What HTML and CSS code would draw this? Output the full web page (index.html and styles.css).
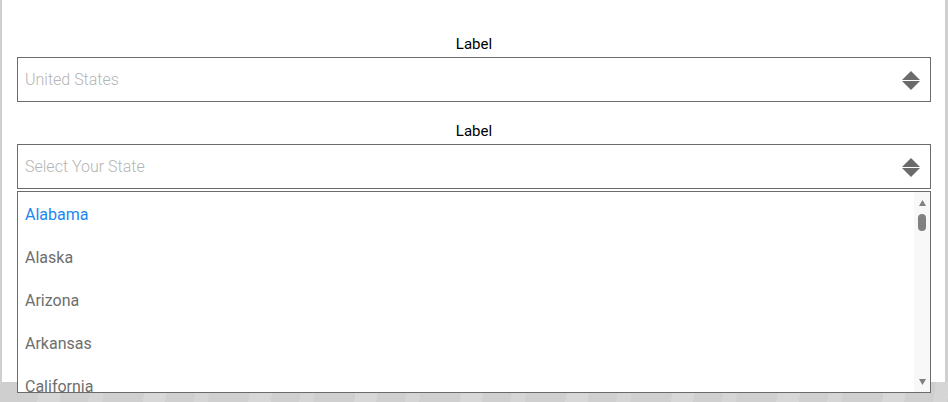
FILE: index.html
```html
<!DOCTYPE html>
<html lang="en">
<head>
  <meta charset="UTF-8" />
  <meta name="viewport" content="width=device-width, initial-scale=1.0"/>
  <title>Select</title>
  <link rel="stylesheet" href="styles.css">
</head>
<body>
  <div class="panel">
    <div class="field">
      <label class="field-label">Label</label>
      <div class="select-box">
        <span class="placeholder">United States</span>
        <svg class="arrows" width="18" height="19" viewBox="0 0 18 19">
          <polygon points="9,0 18,9 0,9" />
          <polygon points="0,10 18,10 9,19" />
        </svg>
      </div>
    </div>

    <div class="field second">
      <label class="field-label">Label</label>
      <div class="select-box">
        <span class="placeholder">Select Your State</span>
        <svg class="arrows" width="18" height="19" viewBox="0 0 18 19">
          <polygon points="9,0 18,9 0,9" />
          <polygon points="0,10 18,10 9,19" />
        </svg>
      </div>

      <div class="dropdown">
        <ul class="options">
          <li class="active">Alabama</li>
          <li>Alaska</li>
          <li>Arizona</li>
          <li>Arkansas</li>
          <li>California</li>
        </ul>
        <div class="scrollbar">
          <svg width="7" height="6" viewBox="0 0 7 6"><polygon points="3.5,0 7,6 0,6" /></svg>
          <div class="thumb"></div>
          <div class="spacer"></div>
          <svg width="7" height="6" viewBox="0 0 7 6"><polygon points="0,0 7,0 3.5,6" /></svg>
        </div>
      </div>
    </div>
  </div>
  <div class="footer"></div>
</body>
</html>
```

FILE: styles.css
```css
body {
  font-family: Roboto, "Liberation Sans", sans-serif;
  background-color: #cfcfcf;
  margin: 0;
  height: 402px;
  overflow: hidden;
}

.panel {
  margin: 0 3px 0 2px;
  height: 382px;
  background-color: #ffffff;
  padding: 35px 14px 0 15px;
  box-sizing: border-box;
}

.field {
  position: relative;
}

.field.second {
  margin-top: 20px;
}

.field-label {
  display: block;
  text-align: center;
  font-size: 15px;
  line-height: 18px;
  color: #000;
  margin-bottom: 4px;
}

.select-box {
  height: 45px;
  border: 1px solid #6b6b6b;
  box-sizing: border-box;
  display: flex;
  align-items: center;
  justify-content: space-between;
  padding: 0 10px 0 7px;
}

.placeholder {
  font-size: 16px;
  font-weight: 300;
  color: #b5b5b5;
}

.arrows {
  fill: #6b6b6b;
  margin-top: 1px;
}

/* popup list, sits over the page */
.dropdown {
  position: absolute;
  left: 0;
  right: 0;
  top: 69px;
  height: 202px;
  border: 1px solid #6b6b6b;
  box-sizing: border-box;
  background-color: #ffffff;
  display: flex;
  z-index: 2;
}

.options {
  list-style: none;
  margin: 0;
  padding: 1px 0 0;
  flex: 1;
  overflow: hidden;
}

.options li {
  height: 43px;
  line-height: 43px;
  padding-left: 7px;
  font-size: 16px;
  color: #6e6e6e;
}

.options li.active {
  color: #1a86f5;
}

.scrollbar {
  width: 16px;
  background-color: #f8f8f8;
  display: flex;
  flex-direction: column;
  align-items: center;
  padding: 8px 0 7px;
  box-sizing: border-box;
}

.scrollbar svg {
  fill: #808080;
}

.thumb {
  width: 8px;
  height: 17px;
  margin-top: 8px;
  border-radius: 4px;
  background-color: #808080;
}

.spacer {
  flex: 1;
}

/* faint pattern of the page behind */
.footer {
  height: 20px;
  background-image: repeating-linear-gradient(100deg, #cfcfcf 0 40px, #d7d7d7 40px 62px, #cfcfcf 62px 90px, #d5d5d5 90px 104px);
}
```
